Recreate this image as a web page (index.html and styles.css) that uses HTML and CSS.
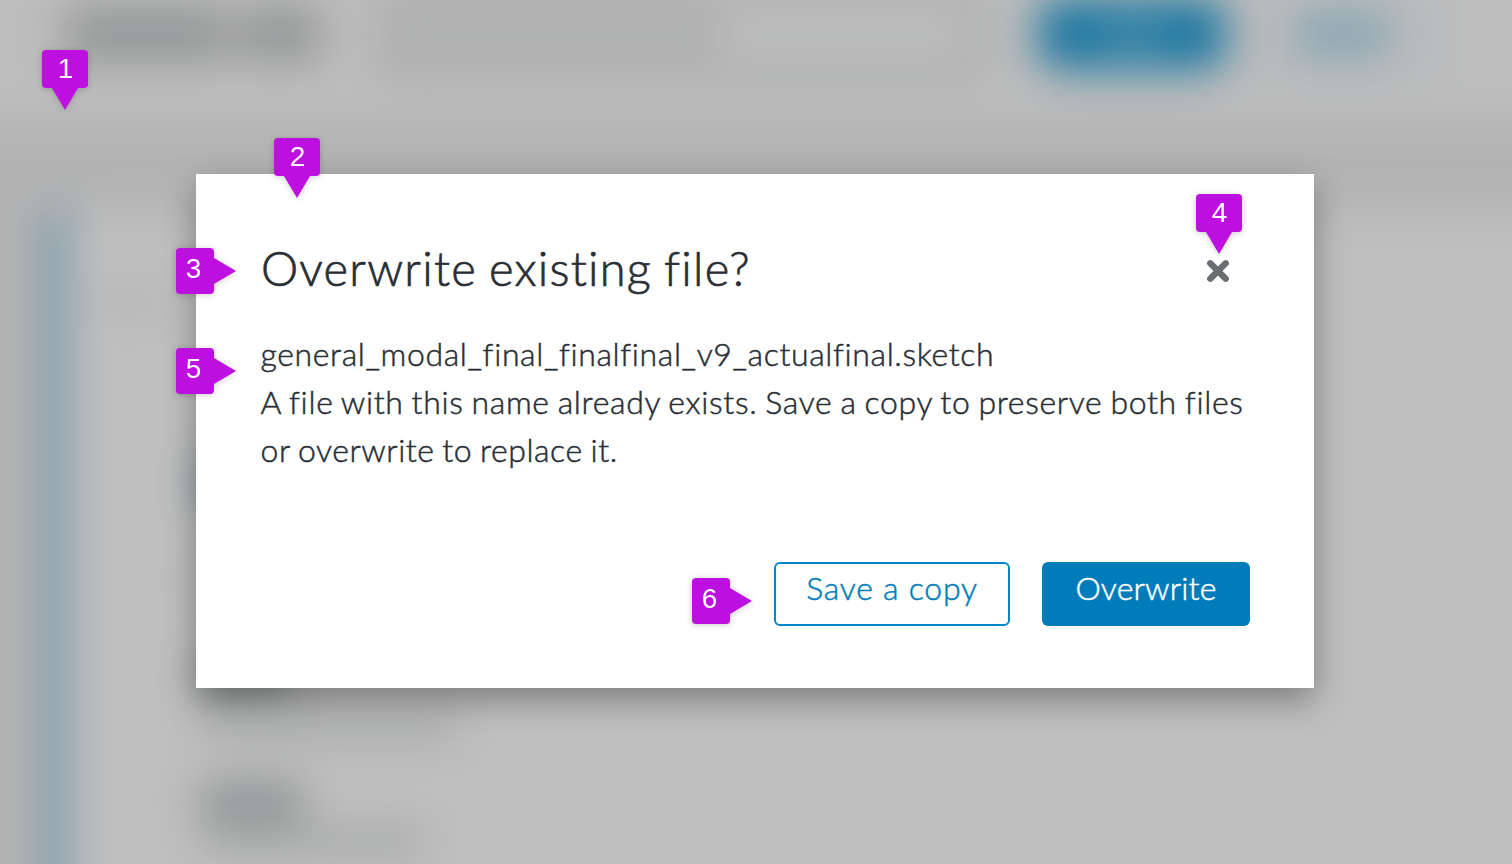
FILE: index.html
```
<!DOCTYPE html>
<html lang="en">
<head>
<meta charset="utf-8">
<title>Overwrite existing file?</title>
<link rel="stylesheet" href="styles.css">
</head>
<body>
<div class="stage">
  <div class="backdrop" aria-hidden="true">
    <div class="page-header">
      <div class="page-title"><i class="word word-long"></i><i class="word word-short"></i></div>
      <div class="page-input"><i class="placeholder"></i></div>
      <div class="page-primary"><i class="primary-label"></i></div>
      <div class="page-secondary"><i class="secondary-label"></i></div>
    </div>
    <div class="page-body">
      <div class="page-panel">
        <i class="crumb"></i>
        <i class="link"></i>
        <i class="label label-mid"></i>
        <i class="label label-one"></i>
        <i class="detail detail-one"></i>
        <i class="label label-two"></i>
        <i class="detail detail-two"></i>
      </div>
    </div>
  </div>

  <main class="modal" role="dialog" aria-labelledby="modal-title">
    <header class="modal-header">
      <h1 class="modal-title" id="modal-title">Overwrite existing file?</h1>
      <button class="close" aria-label="Close">
        <svg width="24" height="24" viewBox="0 0 24 24"><path d="M4.3 4.3 19.7 19.7M19.7 4.3 4.3 19.7" stroke="#6a6e73" stroke-width="6.4" stroke-linecap="round"/></svg>
      </button>
    </header>
    <div class="modal-body">
      <p class="line line-file">general_modal_final_finalfinal_v9_actualfinal.sketch</p>
      <p class="line line-first">A file with this name already exists. Save a copy to preserve both files</p>
      <p class="line line-second">or overwrite to replace it.</p>
    </div>
    <footer class="modal-footer">
      <button class="btn btn-secondary">Save a copy</button>
      <button class="btn btn-primary">Overwrite</button>
    </footer>
  </main>

  <div class="pin pin-down pin-1">1</div>
  <div class="pin pin-down pin-2">2</div>
  <div class="pin pin-right pin-3">3</div>
  <div class="pin pin-down pin-4">4</div>
  <div class="pin pin-right pin-5">5</div>
  <div class="pin pin-right pin-6">6</div>
</div>
</body>
</html>
```
FILE: styles.css
```
* { box-sizing: border-box; }
body { margin: 0; font-family: Lato, "Open Sans", sans-serif; color: #292e34; }
i { display: block; }

.stage {
  position: relative;
  width: 1512px;
  height: 864px;
  padding: 174px 198px 176px 196px;
  overflow: hidden;
  background: #bfbfbf;
}

/* Dimmed, out-of-focus page behind the dialog */
.backdrop {
  position: absolute;
  inset: -60px;
  display: flex;
  flex-direction: column;
  background: #b3b3b3;
  filter: blur(22px);
}
.page-header {
  display: flex;
  align-items: center;
  height: 182px;
  padding: 6px 0 0 126px;
  background: #bdbdbd;
}
.page-title { display: flex; gap: 12px; width: 314px; }
.word { height: 54px; background: #949697; }
.word-long { width: 162px; }
.word-short { width: 80px; }
.page-input {
  display: flex;
  align-items: center;
  width: 602px;
  height: 84px;
  padding-left: 10px;
  border: 8px solid #969898;
}
.placeholder { width: 320px; height: 38px; background: #abacac; }
.page-primary {
  display: flex;
  align-items: center;
  justify-content: center;
  width: 188px;
  height: 72px;
  margin-left: 56px;
  border-radius: 22px;
  background: #1a76a0;
}
.primary-label { width: 70px; height: 18px; background: #5c99b3; }
.page-secondary {
  display: flex;
  align-items: center;
  justify-content: center;
  width: 180px;
  height: 66px;
  margin-left: 26px;
  border: 4px solid #a0b2ba;
}
.secondary-label { width: 96px; height: 42px; background: #86a5b2; }
.page-body { flex: 1; padding: 88px 0 0 112px; }
.page-panel {
  height: 100%;
  padding: 80px 0 0 43px;
  border-left: 9px solid #005e8c;
  background: #bfbfbf;
}
.crumb { width: 54px; height: 22px; background: #b0b0b0; }
.link { width: 110px; height: 40px; margin: 150px 0 0 98px; background: #6a8791; }
.label { margin-left: 97px; height: 32px; background: #85888a; }
.label-mid { width: 110px; margin-top: 64px; background: #b0b1b1; }
.label-one { width: 90px; height: 28px; margin-top: 64px; background: #7a8180; }
.detail { margin-left: 97px; height: 24px; background: #a2a4a4; }
.detail-one { width: 255px; margin-top: 24px; }
.label-two { width: 102px; margin-top: 48px; }
.detail-two { width: 225px; margin-top: 11px; }

.modal {
  position: relative;
  display: flex;
  flex-direction: column;
  height: 514px;
  padding: 64px 64px 62px;
  background: #fff;
  box-shadow: 0 12px 32px rgba(0, 0, 0, .34);
  font-variant-ligatures: none;
}
.modal-header { display: flex; justify-content: space-between; height: 64px; }
.modal-title {
  margin: 0;
  padding-left: 1px;
  font-size: 47px;
  font-weight: 300;
  letter-spacing: 1.08px;
  word-spacing: -2px;
  letter-spacing: 1.25px;
  line-height: 60px;
  white-space: nowrap;
  -webkit-text-stroke: .7px;
}
.close {
  display: flex;
  width: 24px;
  height: 24px;
  margin: 21px 20px 0 0;
  padding: 0;
  border: 0;
  background: none;
}
.modal-body { margin-top: 28px; }
.line {
  margin: 0;
  font-size: 32px;
  font-weight: 300;
  line-height: 48px;
  white-space: nowrap;
  -webkit-text-stroke: .5px;
}
.line-file { padding-left: .5px; letter-spacing: .63px; }
.line-first { padding-left: .5px; letter-spacing: .67px; word-spacing: -1.4px; }
.line-second { padding-left: .5px; letter-spacing: .55px; word-spacing: -1.4px; }
.modal-footer { display: flex; justify-content: flex-end; gap: 32px; margin-top: auto; }
.btn {
  height: 64px;
  padding: 0 0 13px;
  border-radius: 6px;
  font: 300 32px Lato, "Open Sans", sans-serif;
  white-space: nowrap;
  -webkit-text-stroke: .5px;
}
.btn-secondary {
  width: 236px;
  border: 2px solid #0086cc;
  background: #fff;
  color: #007dba;
  letter-spacing: .75px;
}
.btn-primary { width: 208px; border: 0; background: #007cbb; color: #fff; letter-spacing: .2px; }

/* Numbered annotation pins */
.pin {
  position: absolute;
  border-radius: 4px;
  background: #bd10e0;
  color: #fff;
  font: 28px/38px "Liberation Sans", sans-serif;
  text-align: center;
  filter: drop-shadow(0 1px 3px rgba(0, 0, 0, .2));
}
.pin::after { content: ""; position: absolute; background: #bd10e0; }
.pin-down { width: 46px; height: 38px; padding-left: 1px; }
.pin-down::after {
  left: 10px;
  top: 38px;
  width: 26px;
  height: 22px;
  clip-path: polygon(0 0, 100% 0, 50% 100%);
}
.pin-right { width: 38px; height: 46px; padding: 2px 3px 0 0; }
.pin-right::after {
  left: 38px;
  top: 10px;
  width: 22px;
  height: 26px;
  clip-path: polygon(0 0, 100% 50%, 0 100%);
}
.pin-1 { left: 42px; top: 50px; }
.pin-2 { left: 274px; top: 138px; }
.pin-3 { left: 176px; top: 248px; }
.pin-4 { left: 1196px; top: 194px; }
.pin-5 { left: 176px; top: 348px; }
.pin-6 { left: 692px; top: 578px; }
```
